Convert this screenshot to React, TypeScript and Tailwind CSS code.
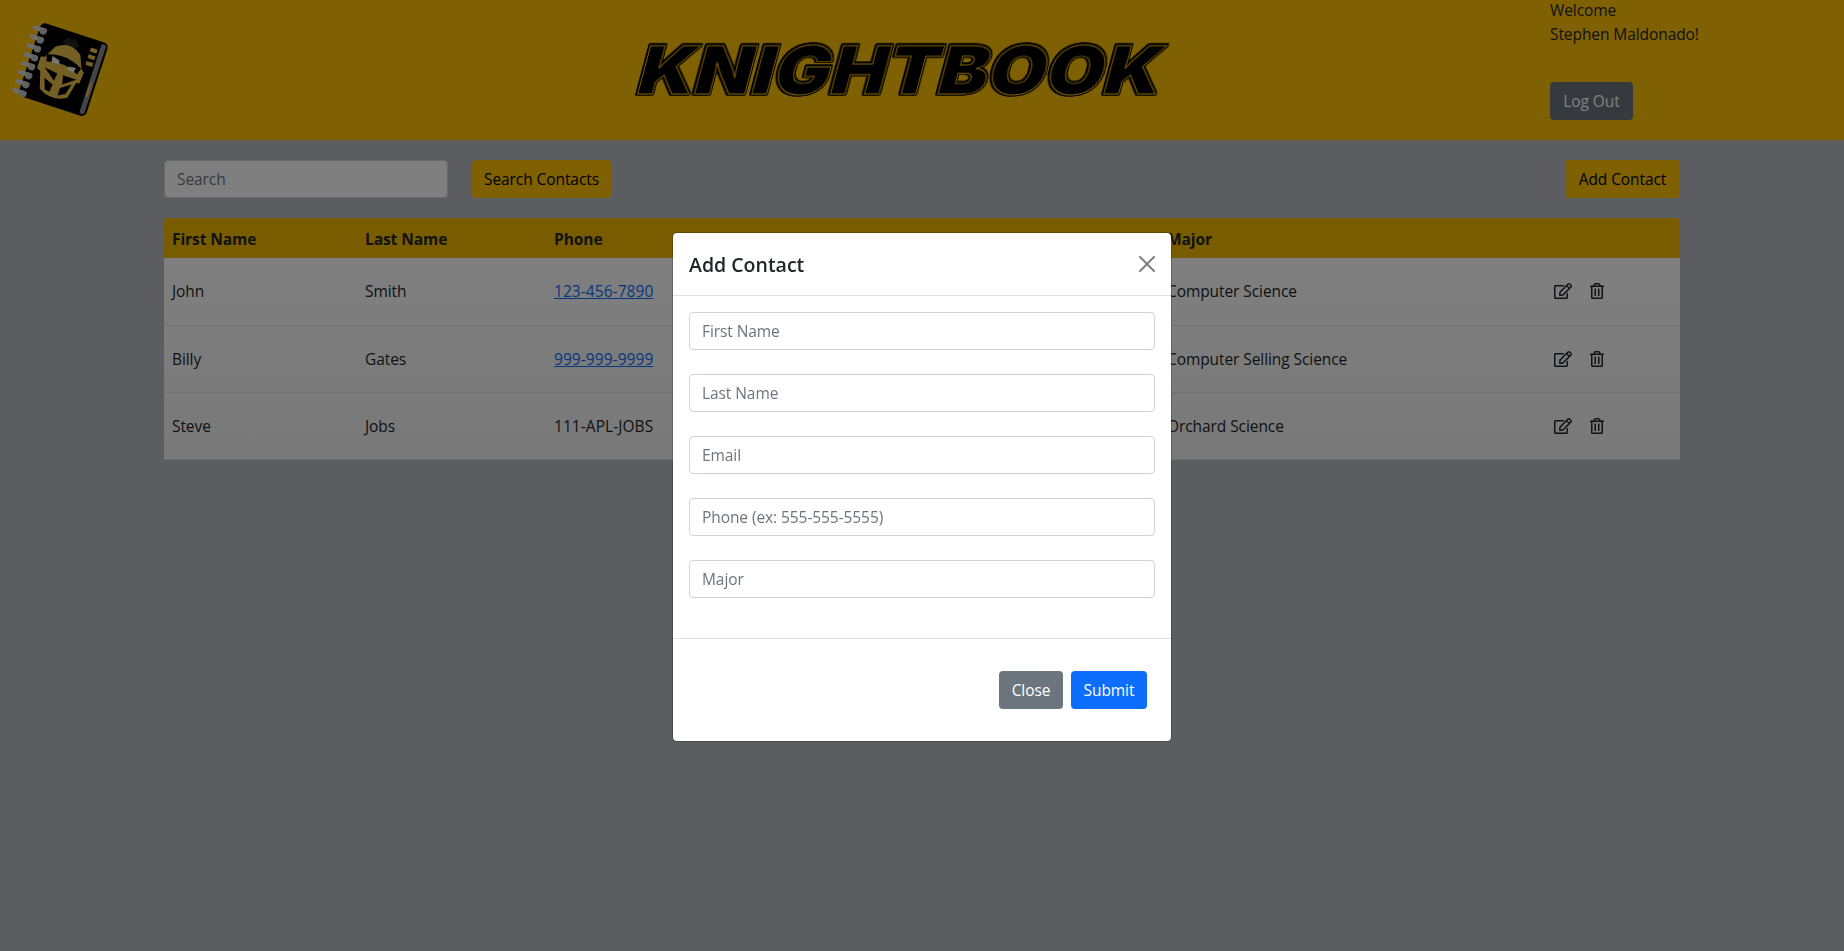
import { FaRegEdit, FaRegTrashAlt } from "react-icons/fa";

const rows = [
  { first: "John", last: "Smith", phone: "123-456-7890", link: true, major: "Computer Science" },
  { first: "Billy", last: "Gates", phone: "999-999-9999", link: true, major: "Computer Selling Science" },
  { first: "Steve", last: "Jobs", phone: "111-APL-JOBS", link: false, major: "Orchard Science" },
];

const fields = ["First Name", "Last Name", "Email", "Phone (ex: 555-555-5555)", "Major"];

function Logo() {
  const rings = [0, 1, 2, 3, 4, 5, 6, 7];
  return (
    <svg width="120" height="115" viewBox="0 0 120 115" className="mt-[10px] block shrink-0">
      <g transform="translate(2 0) rotate(18 61 59)">
        <rect x="26" y="21" width="71" height="77" rx="5" fill="#000" />
        <rect x="90" y="23" width="5" height="73" rx="2" fill="#8a8a8a" />
        <rect x="91" y="64" width="2" height="14" fill="#e8c04a" />
        {rings.map((i) => (
          <g key={i}>
            <rect x="19" y={26 + i * 9.4} width="15" height="4.5" rx="2.2" fill="#d8d8d8" />
            <rect x="27" y={26 + i * 9.4} width="7" height="6.5" rx="3" fill="#c4c4c4" />
          </g>
        ))}
        <rect x="81" y="30" width="7" height="4" fill="#e8c04a" />
        <rect x="81" y="37" width="7" height="4" fill="#e8c04a" />
        <rect x="81" y="44" width="7" height="4" fill="#e8c04a" />
        <path d="M52 33 L58 26 L60 30 L63 26 L70 33 L64 37 L56 37 Z" fill="#222" />
        <path
          d="M47 40 Q60 30 73 40 L79 54 L82 56 L81 68 L78 68 L74 85 Q60 94 45 85 L40 68 L36 66 L36 54 L40 53 Z"
          fill="#e8c04a"
        />
        <path d="M41 50 Q60 43 78 53 L76 60 Q60 51 43 57 Z" fill="#000" />
        <path d="M47 50 L55 52 L56 56 L48 56 Z" fill="#f0f0f0" />
        <path d="M65 55 L73 54 L72 59 L65 58 Z" fill="#f0f0f0" />
        <path d="M43 63 L57 65 L56 73 Z" fill="#000" />
        <path d="M63 65 L77 65 L65 74 Z" fill="#000" />
        <path d="M46 73 L56 77 L55 85 L50 84 Z" fill="#000" />
        <path d="M64 78 L74 71 L71 82 L64 86 Z" fill="#000" />
      </g>
    </svg>
  );
}

export default function App() {
  const font = "font-['Open_Sans','Noto_Sans',sans-serif]";
  return (
    <div className={`relative min-h-screen bg-[#b9bbc0] text-[15.5px] leading-6 tracking-[-0.005em] text-[#212529] ${font}`}>
      <header className="flex h-[140px] items-start bg-[#ffc107]">
        <div className="w-[253px] shrink-0">
          <Logo />
        </div>
        <div className="flex h-full flex-1 items-center justify-center">
          <h1 className="font-['Inter',sans-serif] text-[77px] leading-none font-black tracking-[0.005em] text-black [-webkit-text-stroke:1px_#ffc107] [filter:drop-shadow(1.5px_0_0_#000)_drop-shadow(-1.5px_0_0_#000)_drop-shadow(0_1.5px_0_#000)_drop-shadow(0_-1.5px_0_#000)] [transform:skewX(-15deg)_scale(0.965,0.87)]">
            KNIGHTBOOK
          </h1>
        </div>
        <div className="-mt-[2px] w-[294px] shrink-0">
          <p>Welcome</p>
          <p>Stephen Maldonado!</p>
          <button className="mt-[36px] h-[38px] w-[83px] rounded-[4px] bg-[#6c757d] text-center text-white">Log Out</button>
        </div>
      </header>

      <main className="mx-[164px]">
        <div className="flex items-center pt-5">
          <input
            placeholder="Search"
            className="h-[38px] w-[284px] rounded-[4px] border border-[#ced4da] bg-white px-3 outline-none placeholder:text-[#6c757d]"
          />
          <button className="ml-6 h-[38px] w-[139px] rounded-[4px] bg-[#ffc107] text-center text-black">Search Contacts</button>
          <button className="ml-auto h-[38px] w-[115px] rounded-[4px] bg-[#ffc107] text-center text-black">Add Contact</button>
        </div>

        <table className="mt-5 w-full table-fixed border-collapse">
          <colgroup>
            <col className="w-[193px]" />
            <col className="w-[189px]" />
            <col className="w-[231px]" />
            <col className="w-[382px]" />
            <col className="w-[386px]" />
            <col />
          </colgroup>
          <thead>
            <tr className="h-10 bg-[#f5b800] text-left">
              <th className="rounded-tl-[4px] px-2 pt-[1px] font-bold">First Name</th>
              <th className="px-2 pt-[1px] font-bold">Last Name</th>
              <th className="px-2 pt-[1px] font-bold">Phone</th>
              <th className="px-2 pt-[1px] font-bold">Email</th>
              <th className="px-2 pt-[1px] font-bold">Major</th>
              <th className="rounded-tr-[4px] px-2" />
            </tr>
          </thead>
          <tbody className="bg-gradient-to-b from-white to-[#f2f2f2]">
            {rows.map((r) => (
              <tr key={r.first} className="h-[67px] border-b border-[#dee2e6]">
                <td className="px-2">{r.first}</td>
                <td className="px-2">{r.last}</td>
                <td className="px-2 tracking-[0.004em]">
                  {r.link ? (
                    <a href="#" className="text-[#0d6efd] underline">
                      {r.phone}
                    </a>
                  ) : (
                    r.phone
                  )}
                </td>
                <td className="px-2" />
                <td className="px-2">{r.major}</td>
                <td className="px-2">
                  <div className="flex items-center gap-[17px] pl-[1px]">
                    <FaRegEdit size={18} className="text-[#212529]" />
                    <FaRegTrashAlt size={16} className="text-[#212529]" />
                  </div>
                </td>
              </tr>
            ))}
          </tbody>
        </table>
      </main>

      <div className="fixed inset-0 flex justify-center bg-[rgba(0,0,0,0.5)] pt-[232px]">
        <div className="h-[510px] w-[500px] rounded-[5px] border border-black/20 bg-white bg-clip-padding">
          <div className="flex h-[63px] items-center justify-between border-b border-[#dee2e6] px-4">
            <h2 className="pt-[2px] text-[19.5px] font-semibold tracking-normal">Add Contact</h2>
            <svg width="16" height="16" viewBox="0 0 16 16" className="opacity-50">
              <path d="M.293.293a1 1 0 011.414 0L8 6.586 14.293.293a1 1 0 111.414 1.414L9.414 8l6.293 6.293a1 1 0 01-1.414 1.414L8 9.414l-6.293 6.293a1 1 0 01-1.414-1.414L6.586 8 .293 1.707a1 1 0 010-1.414z" />
            </svg>
          </div>
          <div className="flex flex-col gap-6 border-b border-[#dee2e6] px-4 pt-4 pb-10">
            {fields.map((f) => (
              <input
                key={f}
                placeholder={f}
                className="h-[38px] w-full rounded-[4px] border border-[#ced4da] bg-white px-3 outline-none placeholder:text-[#6c757d]"
              />
            ))}
          </div>
          <div className="flex justify-end gap-2 pt-8 pr-6">
            <button className="h-[38px] w-[64px] rounded-[4px] bg-[#6c757d] text-center text-white">Close</button>
            <button className="h-[38px] w-[76px] rounded-[4px] bg-[#0d6efd] text-center text-white">Submit</button>
          </div>
        </div>
      </div>
    </div>
  );
}
